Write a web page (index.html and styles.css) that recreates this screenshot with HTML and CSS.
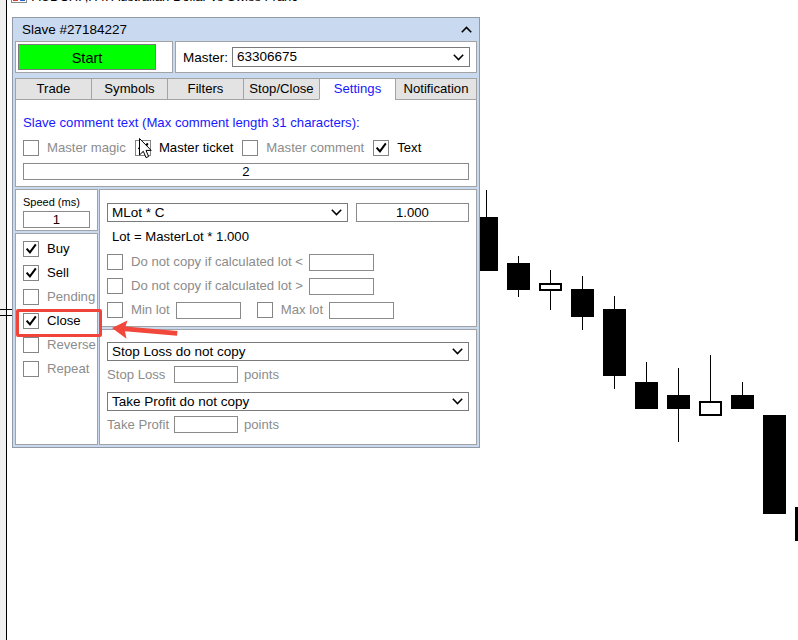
FILE: index.html
```html
<!DOCTYPE html>
<html>
<head>
<meta charset="utf-8">
<title>Slave</title>
<link rel="stylesheet" href="styles.css">
</head>
<body>
<div class="screen">
  <svg class="chart" width="798" height="640" viewBox="0 0 798 640">
    <rect x="0" y="0" width="6" height="640" fill="#f0f0f0"/>
    <rect x="6" y="0" width="1" height="640" fill="#000"/>
    <rect x="0" y="309" width="12" height="1" fill="#000"/>
    <rect x="0" y="315" width="12" height="1" fill="#000"/>
    <g fill="#000">
      <rect x="486" y="190" width="1" height="28"/>
      <rect x="475" y="217" width="23" height="54"/>
      <rect x="518" y="256" width="1" height="41"/>
      <rect x="507" y="263" width="23" height="27"/>
      <rect x="550" y="270" width="1" height="40"/>
      <rect x="582" y="276" width="1" height="54"/>
      <rect x="571" y="289" width="23" height="28"/>
      <rect x="614" y="296" width="1" height="93"/>
      <rect x="603" y="309" width="23" height="67"/>
      <rect x="646" y="362" width="1" height="20"/>
      <rect x="635" y="382" width="23" height="27"/>
      <rect x="678" y="368" width="1" height="74"/>
      <rect x="667" y="395" width="23" height="14"/>
      <rect x="710" y="355" width="1" height="46"/>
      <rect x="742" y="382" width="1" height="13"/>
      <rect x="731" y="395" width="23" height="14"/>
      <rect x="763" y="415" width="23" height="99"/>
      <rect x="795" y="507" width="23" height="34"/>
    </g>
    <rect x="540" y="284" width="21" height="6" fill="#fff" stroke="#000" stroke-width="2"/>
    <rect x="700" y="402" width="21" height="13" fill="#fff" stroke="#000" stroke-width="2"/>
  </svg>

  <svg class="cap-icon" width="16" height="16" viewBox="0 0 16 16">
    <rect x="0.5" y="0.5" width="15" height="15" fill="#fff" stroke="#8a8a8a"/>
    <rect x="2" y="3" width="5" height="11" fill="#e23b2e"/>
    <rect x="9" y="3" width="5" height="11" fill="#2c62c9"/>
  </svg>
  <div class="cap-text">AUDCHF,H4: Australian Dollar vs Swiss Franc</div>

  <div class="panel">
    <div class="hdr">
      <span class="hdr-title">Slave #27184227</span>
      <svg class="chev-up" width="11" height="7" viewBox="0 0 11 7"><path d="M0.8 6.2 5.5 1.4 10.2 6.2" fill="none" stroke="#000" stroke-width="1.6"/></svg>
    </div>

    <div class="row1">
      <div class="startbox"><div class="startbtn">Start</div></div>
      <div class="masterbox">
        <span class="master-lbl">Master:</span>
        <div class="combo grow">
          <span>63306675</span>
          <svg class="chev" width="11" height="7" viewBox="0 0 11 7"><path d="M0.8 0.8 5.5 5.6 10.2 0.8" fill="none" stroke="#000" stroke-width="1.5"/></svg>
        </div>
      </div>
    </div>

    <div class="tabs">
      <div class="tab">Trade</div>
      <div class="tab">Symbols</div>
      <div class="tab">Filters</div>
      <div class="tab">Stop/Close</div>
      <div class="tab sel">Settings</div>
      <div class="tab last">Notification</div>
    </div>

    <div class="pane">
      <div class="note">Slave comment text (Max comment length 31 characters):</div>
      <div class="opts">
        <div class="opt"><span class="cb"></span><span class="lbl dim">Master magic</span></div>
        <div class="opt"><span class="cb"><svg viewBox="0 0 16 16"><path d="M3 7.5 6.8 11.8 13.5 2.8"/></svg></span><span class="lbl">Master ticket</span></div>
        <div class="opt"><span class="cb"></span><span class="lbl dim">Master comment</span></div>
        <div class="opt"><span class="cb"><svg viewBox="0 0 16 16"><path d="M3 7.5 6.8 11.8 13.5 2.8"/></svg></span><span class="lbl">Text</span></div>
      </div>
      <div class="field wide">2</div>
    </div>

    <div class="lower">
      <div class="leftcol">
        <div class="speedbox">
          <div class="speed-lbl">Speed (ms)</div>
          <div class="field speed-in">1</div>
        </div>
        <div class="listbox">
          <div class="lrow"><span class="cb"><svg viewBox="0 0 16 16"><path d="M3 7.5 6.8 11.8 13.5 2.8"/></svg></span><span class="lbl">Buy</span></div>
          <div class="lrow"><span class="cb"><svg viewBox="0 0 16 16"><path d="M3 7.5 6.8 11.8 13.5 2.8"/></svg></span><span class="lbl">Sell</span></div>
          <div class="lrow"><span class="cb"></span><span class="lbl dim">Pending</span></div>
          <div class="lrow"><span class="cb"><svg viewBox="0 0 16 16"><path d="M3 7.5 6.8 11.8 13.5 2.8"/></svg></span><span class="lbl">Close</span></div>
          <div class="lrow"><span class="cb"></span><span class="lbl dim">Reverse</span></div>
          <div class="lrow"><span class="cb"></span><span class="lbl dim">Repeat</span></div>
        </div>
      </div>

      <div class="rightcol">
        <div class="lotbox">
          <div class="lotrow">
            <div class="combo lot-combo">
              <span>MLot * C</span>
              <svg class="chev" width="11" height="7" viewBox="0 0 11 7"><path d="M0.8 0.8 5.5 5.6 10.2 0.8" fill="none" stroke="#000" stroke-width="1.5"/></svg>
            </div>
            <div class="field lot-in">1.000</div>
          </div>
          <div class="formula">Lot = MasterLot * 1.000</div>
          <div class="crow first"><span class="cb"></span><span class="lbl dim">Do not copy if calculated lot &lt;</span><span class="field small ml6"></span></div>
          <div class="crow"><span class="cb"></span><span class="lbl dim">Do not copy if calculated lot &gt;</span><span class="field small ml6"></span></div>
          <div class="crow"><span class="cb"></span><span class="lbl dim">Min lot</span><span class="field small ml6"></span><span class="cb ml16"></span><span class="lbl dim">Max lot</span><span class="field small ml6"></span></div>
        </div>
        <div class="slbox">
          <div class="combo full">
            <span>Stop Loss do not copy</span>
            <svg class="chev" width="11" height="7" viewBox="0 0 11 7"><path d="M0.8 0.8 5.5 5.6 10.2 0.8" fill="none" stroke="#000" stroke-width="1.5"/></svg>
          </div>
          <div class="slrow"><span class="sl-lbl dim">Stop Loss</span><span class="field pts"></span><span class="dim pts-lbl">points</span></div>
          <div class="combo full second">
            <span>Take Profit do not copy</span>
            <svg class="chev" width="11" height="7" viewBox="0 0 11 7"><path d="M0.8 0.8 5.5 5.6 10.2 0.8" fill="none" stroke="#000" stroke-width="1.5"/></svg>
          </div>
          <div class="slrow"><span class="sl-lbl dim">Take Profit</span><span class="field pts"></span><span class="dim pts-lbl">points</span></div>
        </div>
      </div>
    </div>
  </div>

  <div class="highlight"></div>
  <svg class="arrow" width="70" height="24" viewBox="110 318 70 24">
    <path d="M112 328 L127.5 320.5 L125.5 326.6 L177.5 331 L177 335.8 L125 331.2 L126.5 338.8 Z" fill="#f2473b"/>
  </svg>
  <svg class="cursor" width="14" height="22" viewBox="0 0 14 22">
    <path d="M0.5 0.5 L0.5 17 L4.3 13.3 L7 19.6 L9.6 18.5 L7 12.4 L12.2 12.4 Z" fill="#fff" stroke="#000" stroke-width="1" stroke-linejoin="miter"/>
  </svg>
</div>
</body>
</html>
```

FILE: styles.css
```css
* { box-sizing: border-box; }
html, body { margin: 0; padding: 0; }
body {
  width: 798px;
  height: 640px;
  overflow: hidden;
  background: #fff;
  font-family: "Liberation Sans", Arial, sans-serif;
  font-size: 13.15px;
  color: #000;
}
.screen { position: relative; width: 798px; height: 640px; overflow: hidden; }
.chart { position: absolute; left: 0; top: 0; }
.cap-icon { position: absolute; left: 11px; top: -13px; }
.cap-text { position: absolute; left: 32px; top: -11px; line-height: 16px; font-size: 13px; white-space: nowrap; }

.panel {
  position: absolute;
  left: 12px;
  top: 17px;
  width: 468px;
  height: 431px;
  background: #c9d9ef;
  border: 1px solid #939aa5;
  padding: 0 2px 2px;
  display: flex;
  flex-direction: column;
}
.hdr {
  height: 23px;
  display: flex;
  align-items: center;
  justify-content: space-between;
  padding: 0 5px 0 7px;
}
.hdr-title { font-size: 13.5px; line-height: 16px; }
.chev-up { display: block; }

.row1 { height: 32px; display: flex; gap: 2px; }
.startbox { width: 158px; background: #fff; border: 1px solid #a3a3a3; padding: 2px; }
.startbtn {
  width: 138px;
  height: 26px;
  background: #00ff00;
  border: 1px solid #7c7c7c;
  display: flex;
  align-items: center;
  justify-content: center;
  font-size: 14.5px;
  padding-top: 1px;
}
.masterbox {
  flex: 1;
  background: #fff;
  border: 1px solid #a3a3a3;
  display: flex;
  align-items: center;
  padding: 0 6px 0 7px;
}
.master-lbl { width: 49px; font-size: 13.5px; }

.combo {
  height: 19px;
  border: 1px solid #7a7a7a;
  background: #fff;
  display: flex;
  align-items: center;
  justify-content: space-between;
  padding: 0 5px 0 4px;
  font-size: 13.5px;
  line-height: 16px;
}
.combo.grow { flex: 1; height: 20px; }
.chev { display: block; }

.tabs { margin-top: 5px; display: flex; height: 22px; }
.tab {
  width: 76px;
  border: 1px solid #a3a3a3;
  border-right: none;
  background: #e3e3e3;
  text-align: center;
  line-height: 20px;
}
.tab.last { flex: 1; border-right: 1px solid #a3a3a3; }
.tab.sel { background: #fff; border-bottom-color: #fff; color: #1818ff; }

.pane {
  height: 87px;
  background: #fff;
  border: 1px solid #a3a3a3;
  border-top: none;
  padding: 0 7px;
}
.note { margin-top: 15px; line-height: 16px; color: #1818ff; }
.opts { margin-top: 9px; height: 16px; display: flex; align-items: center; gap: 9px; }
.opt { display: flex; align-items: center; }
.lbl { margin-left: 8px; line-height: 16px; white-space: nowrap; }
.dim { color: #8c8c8c; }

.cb {
  width: 16px;
  height: 16px;
  flex: none;
  border: 1px solid #858585;
  background: #fff;
  display: block;
}
.cb svg { display: block; width: 14px; height: 14px; }
.cb path { fill: none; stroke: #000; stroke-width: 2.3; }

.field {
  display: block;
  height: 17px;
  border: 1px solid #8a8a8a;
  background: #fff;
  text-align: center;
  line-height: 15px;
}
.field.wide { margin-top: 7px; }

.lower { margin-top: 2px; height: 256px; display: flex; gap: 1px; }
.leftcol { width: 83px; display: flex; flex-direction: column; gap: 2px; }
.speedbox { height: 42px; background: #fff; border: 1px solid #a3a3a3; padding: 6px 7px 0; }
.speed-lbl { font-size: 11px; line-height: 13px; }
.speed-in { margin-top: 2px; height: 17px; color: #1a0000; }
.listbox { flex: 1; background: #fff; border: 1px solid #a3a3a3; padding: 7px 7px 0; }
.lrow { height: 16px; display: flex; align-items: center; margin-bottom: 8px; }

.rightcol { flex: 1; display: flex; flex-direction: column; gap: 2px; }
.lotbox { height: 138px; background: #fff; border: 1px solid #a3a3a3; padding: 13px 7px 0; }
.lotrow { display: flex; gap: 8px; }
.lot-combo { width: 241px; }
.lot-in { flex: 1; height: 19px; line-height: 17px; }
.formula { margin-top: 7px; padding-left: 5px; line-height: 16px; }
.crow { height: 16px; display: flex; align-items: center; margin-top: 8px; }
.crow.first { margin-top: 9px; }
.field.small { width: 65px; height: 17px; }
.ml8 { margin-left: 8px; }
.ml6 { margin-left: 6px; }
.ml16 { margin-left: 16px; }

.slbox { flex: 1; background: #fff; border: 1px solid #a3a3a3; padding: 12px 7px 0; }
.combo.second { margin-top: 9px; }
.slrow { height: 17px; margin-top: 5px; display: flex; align-items: center; }
.sl-lbl { width: 67px; line-height: 16px; white-space: nowrap; }
.field.pts { width: 64px; }
.pts-lbl { margin-left: 6px; line-height: 16px; }

.highlight {
  position: absolute;
  left: 16px;
  top: 309px;
  width: 86px;
  height: 28px;
  border: 3px solid #f0433a;
  border-radius: 2px;
}
.arrow { position: absolute; left: 110px; top: 318px; }
.cursor { position: absolute; left: 139px; top: 138px; }
```
